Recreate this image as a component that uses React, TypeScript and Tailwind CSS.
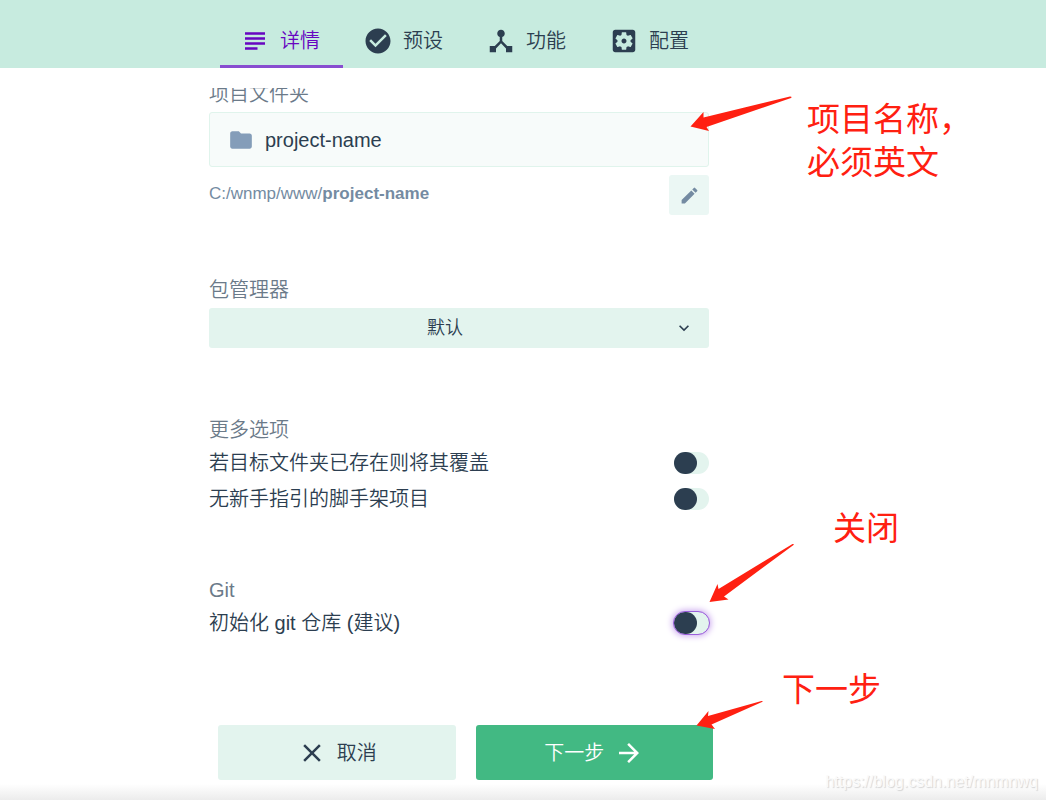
import React, { useState } from 'react';
import {
  MdArrowForward,
  MdCheckCircle,
  MdClose,
  MdDeviceHub,
  MdEdit,
  MdFolder,
  MdKeyboardArrowDown,
  MdSubject,
} from 'react-icons/md';

interface IconProps {
  size?: number;
  className?: string;
}

const SettingsBoxIcon: React.FC<IconProps> = ({ size = 24, className }) => (
  <svg width={size} height={size} viewBox="0 0 24 24" fill="currentColor" className={className}>
    <path d="M12 10c-1.1 0-2 .9-2 2s.9 2 2 2 2-.9 2-2-.9-2-2-2zm7-7H5c-1.11 0-2 .9-2 2v14c0 1.1.89 2 2 2h14c1.11 0 2-.9 2-2V5c0-1.1-.89-2-2-2zm-1.75 9c0 .23-.02.46-.05.68l1.48 1.16c.13.11.17.3.08.45l-1.4 2.42c-.09.15-.27.21-.43.15l-1.74-.7c-.36.28-.76.51-1.18.69l-.26 1.85c-.03.17-.18.3-.35.3h-2.8c-.17 0-.32-.13-.35-.29l-.26-1.85c-.43-.18-.82-.41-1.18-.69l-1.74.7c-.16.06-.34 0-.43-.15l-1.4-2.42c-.09-.15-.05-.34.08-.45l1.48-1.16c-.03-.23-.05-.46-.05-.69 0-.23.02-.46.05-.68l-1.48-1.16c-.13-.11-.17-.3-.08-.45l1.4-2.42c.09-.15.27-.21.43-.15l1.74.7c.36-.28.76-.51 1.18-.69l.26-1.85c.03-.17.18-.3.35-.3h2.8c.17 0 .32.13.35.29l.26 1.85c.43.18.82.41 1.18.69l1.74-.7c.16-.06.34 0 .43.15l1.4 2.42c.09.15.05.34-.08.45l-1.48 1.16c.03.23.05.46.05.69z" />
  </svg>
);

const tabs = [
  { id: 'details', label: '详情', Icon: MdSubject },
  { id: 'presets', label: '预设', Icon: MdCheckCircle },
  { id: 'features', label: '功能', Icon: MdDeviceHub },
  { id: 'config', label: '配置', Icon: SettingsBoxIcon },
];

interface SwitchRowProps {
  id: string;
  label: string;
  highlighted?: boolean;
}

const SwitchRow: React.FC<SwitchRowProps> = ({ id, label, highlighted }) => {
  const [checked, setChecked] = useState(false);

  return (
    <div className="flex h-9 items-center justify-between">
      <label htmlFor={id} className="text-xl">{label}</label>
      <input
        id={id}
        type="checkbox"
        role="switch"
        checked={checked}
        onChange={() => setChecked(!checked)}
        className={`flex h-[22px] w-[35px] appearance-none rounded-full bg-[#e3f4ee] before:h-[22px] before:w-[23px] before:rounded-full before:bg-[#2c3e50] checked:justify-end ${
          highlighted ? 'outline outline-[#9a5fda] shadow-[0_0_6px_2px_#cba8ee]' : ''
        }`}
      />
    </div>
  );
};

const GroupTitle: React.FC<{ children: React.ReactNode }> = ({ children }) => (
  <h2 className="mb-[3px] text-xl leading-6 text-[#6b7a89]">{children}</h2>
);

// Hand-drawn hints that sit over the form
const Annotations: React.FC = () => (
  <div className="pointer-events-none absolute inset-0 text-[33px] leading-[43px] font-normal text-[#ff2011]">
    <svg width="1046" height="800" viewBox="0 0 1046 800" fill="currentColor" className="absolute top-0 left-0">
      <path d="M690.5 126.5L703.5 112L703.5 117.5L790 96.5Q792.5 96.5 791 98L706.5 127L709 131Z" />
      <path d="M709.5 602L717.5 584L718.5 589L792.5 544Q794.5 543.5 793.5 545L724 596.5L728.5 599.5Z" />
      <path d="M696.5 725.5L708.5 711L708 716L761.5 701Q764 701 762 702L711.5 724.5L715 729Z" />
    </svg>
    <p className="absolute top-[98px] left-[807px] whitespace-nowrap">项目名称，<br />必须英文</p>
    <p className="absolute top-[507px] left-[833px] whitespace-nowrap">关闭</p>
    <p className="absolute top-[668px] left-[782px] whitespace-nowrap">下一步</p>
    <p className="absolute top-[770px] right-2 text-base leading-6 text-[#fafafa] [text-shadow:1px_1px_1px_#d4d4d4]">
      https://blog.csdn.net/mnmnwq
    </p>
  </div>
);

const App: React.FC = () => {
  const [activeTab, setActiveTab] = useState('details');
  const [projectName, setProjectName] = useState('project-name');

  return (
    <div className="relative flex min-h-screen flex-col overflow-hidden bg-white font-['Liberation_Sans','Noto_Sans_CJK_SC',sans-serif] font-[350] text-[#2c3e50]">
      {/* Wizard tabs */}
      <nav className="flex justify-center bg-[#c7ebdf] pt-3.5 pr-[114px]">
        {tabs.map(({ id, label, Icon }) => (
          <button
            key={id}
            type="button"
            onClick={() => setActiveTab(id)}
            className={`flex h-[54px] w-[123px] items-center gap-2.5 border-b-3 pt-[3px] pl-5 text-xl ${
              activeTab === id ? 'border-[#884dd0] text-[#6806c1]' : 'border-transparent'
            }`}
          >
            <Icon size={30} />
            {label}
          </button>
        ))}
      </nav>

      {/* Scrolled form */}
      <main className="mt-5 flex flex-1 justify-center overflow-hidden pr-32">
        <div className="-mt-1.5 w-full max-w-[500px]">
          <label htmlFor="folder" className="mb-1.5 block text-xl leading-6 text-[#6b7a89]">项目文件夹</label>
          <div className="flex h-[55px] items-center gap-[11px] rounded-[3px] border border-[#e0f4ec] bg-[#f7fbfa] px-[18px]">
            <MdFolder size={26} className="shrink-0 text-[#849db9]" />
            <input
              id="folder"
              type="text"
              value={projectName}
              onChange={(e) => setProjectName(e.target.value)}
              className="w-full bg-transparent text-xl outline-none"
            />
          </div>
          <div className="mt-2 flex h-10 items-center justify-between text-[17px] text-[#748ba2]">
            <span className="pb-0.5">C:/wnmp/www/<b className="font-bold">{projectName}</b></span>
            <button type="button" aria-label="编辑" className="flex size-10 items-center justify-center rounded-[3px] bg-[#ebf7f4]">
              <MdEdit size={21} />
            </button>
          </div>

          <div className="mt-[63px]">
            <label htmlFor="manager" className="mb-1.5 block text-xl leading-6 text-[#6b7a89]">包管理器</label>
            <div className="relative">
              <select
                id="manager"
                className="block h-10 w-full appearance-none rounded-[3px] bg-[#e3f4ee] pr-7 text-lg [text-align-last:center]"
              >
                <option>默认</option>
                <option>npm</option>
                <option>yarn</option>
              </select>
              <MdKeyboardArrowDown size={20} className="pointer-events-none absolute top-2.5 right-[15px]" />
            </div>
          </div>

          <section className="mt-[70px]">
            <GroupTitle>更多选项</GroupTitle>
            <SwitchRow id="overwrite" label="若目标文件夹已存在则将其覆盖" />
            <SwitchRow id="bare" label="无新手指引的脚手架项目" />
          </section>

          <section className="mt-[61px]">
            <GroupTitle>Git</GroupTitle>
            <SwitchRow id="git" label="初始化 git 仓库 (建议)" highlighted />
          </section>
        </div>
      </main>

      {/* Actions */}
      <footer className="flex justify-center bg-linear-to-t from-[#ececec] via-white via-[16px] to-white pr-[115px] pb-5">
        <div className="grid w-full max-w-[495px] grid-cols-2 gap-5">
          <button type="button" className="flex h-[55px] items-center justify-center gap-2.5 rounded-[3px] bg-[#e3f4ee] text-xl">
            <MdClose size={30} />
            取消
          </button>
          <button type="button" className="flex h-[55px] items-center justify-center gap-2.5 rounded-[3px] bg-[#42b983] text-xl text-white">
            下一步
            <MdArrowForward size={30} />
          </button>
        </div>
      </footer>

      <Annotations />
    </div>
  );
};

export default App;
